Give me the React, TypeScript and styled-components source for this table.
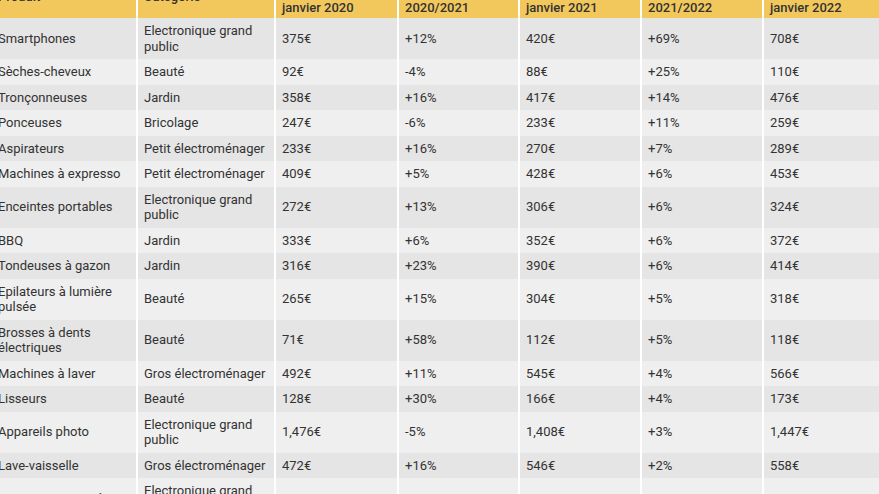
import React from "react";
import styled, { createGlobalStyle } from "styled-components";

const GlobalStyle = createGlobalStyle`
  html, body {
    margin: 0;
    padding: 0;
    background: #ffffff;
    overflow: hidden;
  }
  body {
    font-family: Roboto, "Liberation Sans", Arial, sans-serif;
  }
`;

const Viewport = styled.div`
  width: 879px;
  height: 494px;
  overflow: hidden;
`;

const Table = styled.table`
  margin-top: -24px;
  margin-left: -8px;
  width: 902px;
  table-layout: fixed;
  border-collapse: separate;
  border-spacing: 0;
  font-family: Roboto, "Liberation Sans", Arial, sans-serif;
  font-size: 13px;
  color: #333333;
`;

const HeadCell = styled.th<{ $align: "middle" | "bottom" }>`
  height: 42px;
  box-sizing: border-box;
  background: #f2c85d;
  text-align: left;
  font-weight: 500;
  line-height: 15.5px;
  padding: 0 6px ${(p) => (p.$align === "bottom" ? "3px" : "0")} 6px;
  vertical-align: ${(p) => p.$align};
  border-right: 2px solid #ffffff;
  white-space: nowrap;
`;

const Row = styled.tr<{ $odd: boolean }>`
  background: ${(p) => (p.$odd ? "#e5e5e5" : "#efefef")};
`;

const Cell = styled.td`
  padding: 5px 6px;
  line-height: 15.5px;
  vertical-align: middle;
  border-right: 2px solid #ffffff;
  font-weight: 400;
`;

const widths = [146, 138, 123, 121, 122, 122, 130];

const headers: { label: string; align: "middle" | "bottom" }[] = [
  { label: "Produit", align: "middle" },
  { label: "Catégorie", align: "middle" },
  { label: "janvier 2020", align: "bottom" },
  { label: "2020/2021", align: "bottom" },
  { label: "janvier 2021", align: "bottom" },
  { label: "2021/2022", align: "bottom" },
  { label: "janvier 2022", align: "bottom" },
];

const rows: string[][] = [
  ["Smartphones", "Electronique grand public", "375€", "+12%", "420€", "+69%", "708€"],
  ["Sèches-cheveux", "Beauté", "92€", "-4%", "88€", "+25%", "110€"],
  ["Tronçonneuses", "Jardin", "358€", "+16%", "417€", "+14%", "476€"],
  ["Ponceuses", "Bricolage", "247€", "-6%", "233€", "+11%", "259€"],
  ["Aspirateurs", "Petit électroménager", "233€", "+16%", "270€", "+7%", "289€"],
  ["Machines à expresso", "Petit électroménager", "409€", "+5%", "428€", "+6%", "453€"],
  ["Enceintes portables", "Electronique grand public", "272€", "+13%", "306€", "+6%", "324€"],
  ["BBQ", "Jardin", "333€", "+6%", "352€", "+6%", "372€"],
  ["Tondeuses à gazon", "Jardin", "316€", "+23%", "390€", "+6%", "414€"],
  ["Epilateurs à lumière pulsée", "Beauté", "265€", "+15%", "304€", "+5%", "318€"],
  ["Brosses à dents électriques", "Beauté", "71€", "+58%", "112€", "+5%", "118€"],
  ["Machines à laver", "Gros électroménager", "492€", "+11%", "545€", "+4%", "566€"],
  ["Lisseurs", "Beauté", "128€", "+30%", "166€", "+4%", "173€"],
  ["Appareils photo", "Electronique grand public", "1,476€", "-5%", "1,408€", "+3%", "1,447€"],
  ["Lave-vaisselle", "Gros électroménager", "472€", "+16%", "546€", "+2%", "558€"],
  ["Montres connectées", "Electronique grand public", "351€", "+3%", "362€", "+2%", "371€"],
  ["Téléviseurs", "Electronique grand public", "520€", "+1%", "525€", "+1%", "530€"],
];

export default function App() {
  return (
    <>
      <GlobalStyle />
      <Viewport>
        <Table>
          <colgroup>
            {widths.map((w, i) => (
              <col key={i} style={{ width: w }} />
            ))}
          </colgroup>
          <thead>
            <tr>
              {headers.map((h) => (
                <HeadCell key={h.label} $align={h.align}>
                  {h.label}
                </HeadCell>
              ))}
            </tr>
          </thead>
          <tbody>
            {rows.map((r, i) => (
              <Row key={r[0]} $odd={i % 2 === 0}>
                {r.map((c, j) => (
                  <Cell key={j}>{c}</Cell>
                ))}
              </Row>
            ))}
          </tbody>
        </Table>
      </Viewport>
    </>
  );
}
